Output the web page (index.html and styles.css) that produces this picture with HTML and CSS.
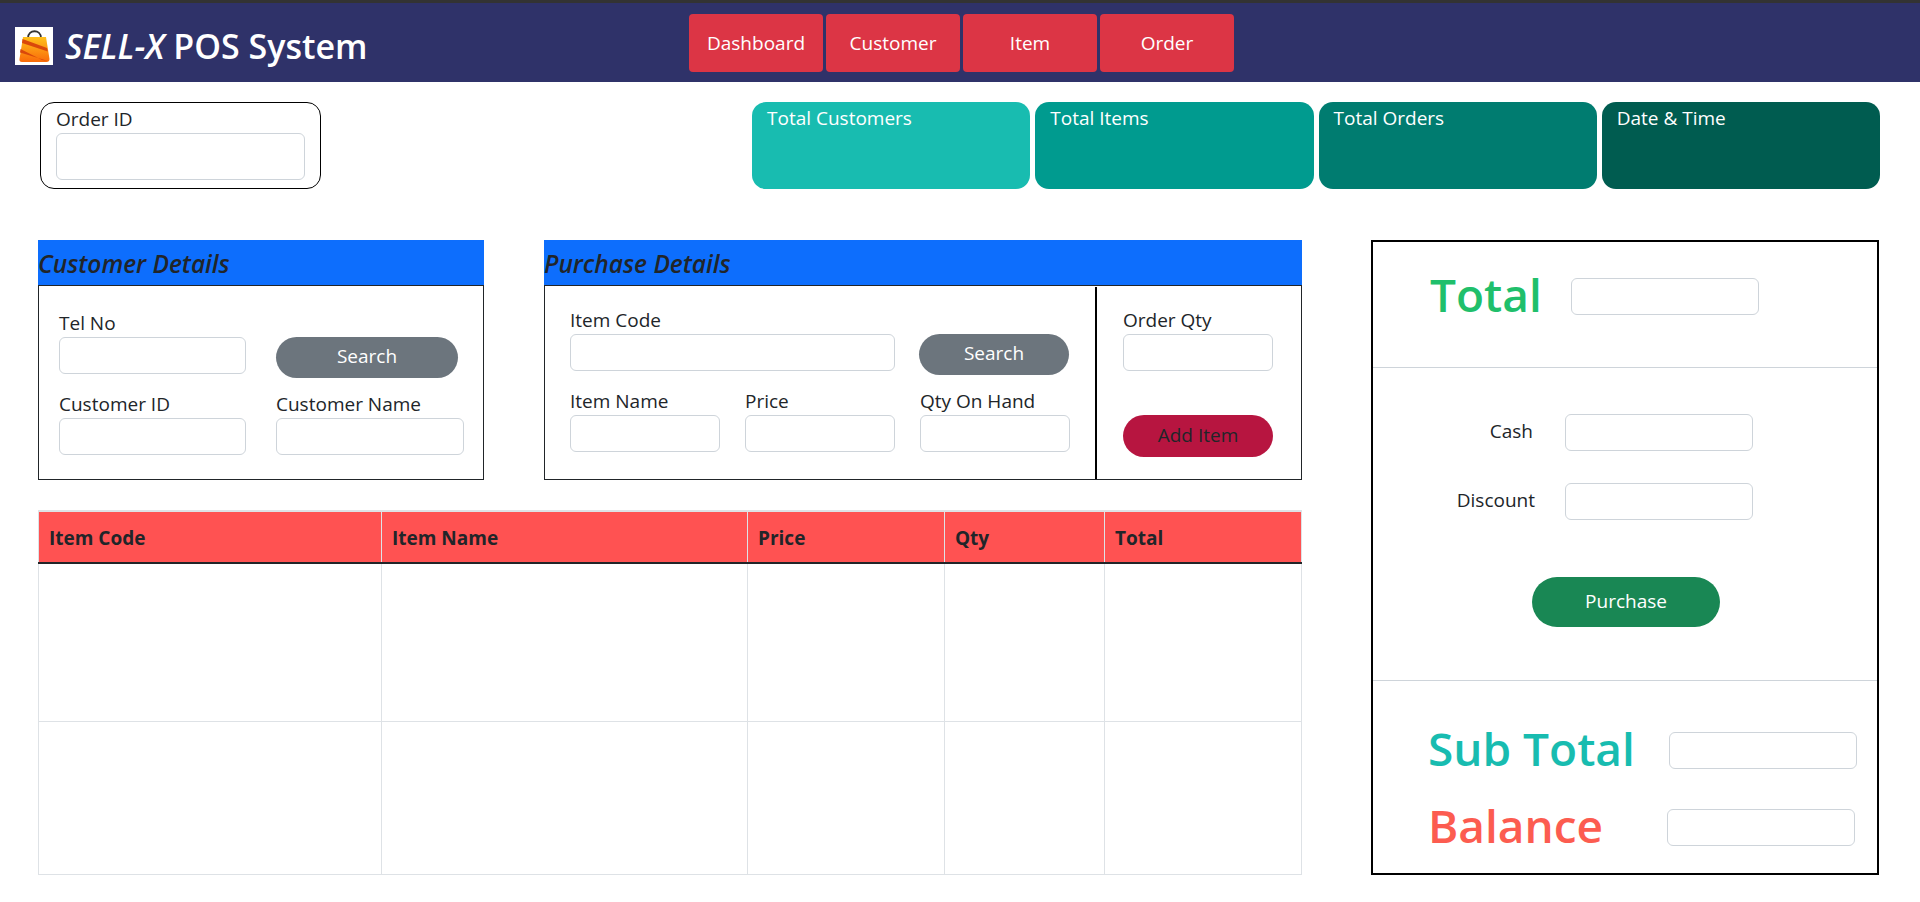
FILE: index.html
```html
<!DOCTYPE html>
<html lang="en">
<head>
    <meta charset="UTF-8">
    <meta name="viewport" content="width=device-width, initial-scale=1.0">
    <title>SELL-X POS System</title>
    <link rel="stylesheet" href="styles.css">
</head>
<body>
    <header class="topbar">
        <div class="brand">
            <svg class="logo" viewBox="0 0 38 38" width="38" height="38">
                <defs>
                    <linearGradient id="bag" x1="0" y1="0" x2="0" y2="1">
                        <stop offset="0" stop-color="#ffc01a"/>
                        <stop offset="1" stop-color="#f96a0a"/>
                    </linearGradient>
                </defs>
                <rect width="38" height="38" fill="#fff"/>
                <path d="M13 11 C13 2 26 2 26 11" fill="none" stroke="#333" stroke-width="1.8"/>
                <path d="M8 10 H31 L34.5 32 Q34.5 35 31.500 35 H7 Q4 35 4.500 32 Z" fill="url(#bag)"/>
                <path d="M7.500 12 L32 21 L32.800 24.500 L7 16 Z" fill="#d9480b"/>
                <path d="M5.500 22 L27 33 L33 34 L5 25.500 Z" fill="#d9480b"/>
            </svg>
            <h1 class="brand-title"><em>SELL-X</em> POS System</h1>
        </div>
        <nav class="nav">
            <a class="nav-btn">Dashboard</a>
            <a class="nav-btn">Customer</a>
            <a class="nav-btn">Item</a>
            <a class="nav-btn">Order</a>
        </nav>
    </header>

    <section class="summary">
        <div class="order-box">
            <label>Order ID</label>
            <input type="text" class="input input-tall">
        </div>
        <div class="stats">
            <div class="stat stat-1">Total Customers</div>
            <div class="stat stat-2">Total Items</div>
            <div class="stat stat-3">Total Orders</div>
            <div class="stat stat-4">Date &amp; Time</div>
        </div>
    </section>

    <main class="content">
        <div class="left-col">
            <div class="panels">
                <div class="panel panel-customer">
                    <h2 class="panel-head">Customer Details</h2>
                    <div class="panel-body customer-grid">
                        <div class="field">
                            <label>Tel No</label>
                            <input type="text" class="input">
                        </div>
                        <div class="field field-btn">
                            <button class="btn btn-grey btn-customer">Search</button>
                        </div>
                        <div class="field">
                            <label>Customer ID</label>
                            <input type="text" class="input">
                        </div>
                        <div class="field">
                            <label>Customer Name</label>
                            <input type="text" class="input">
                        </div>
                    </div>
                </div>
                <div class="panel panel-purchase">
                    <h2 class="panel-head">Purchase Details</h2>
                    <div class="panel-body purchase-body">
                        <div class="purchase-grid">
                            <div class="field span-2">
                                <label>Item Code</label>
                                <input type="text" class="input">
                            </div>
                            <div class="field field-btn">
                                <button class="btn btn-grey">Search</button>
                            </div>
                            <div class="field">
                                <label>Item Name</label>
                                <input type="text" class="input">
                            </div>
                            <div class="field">
                                <label>Price</label>
                                <input type="text" class="input">
                            </div>
                            <div class="field">
                                <label>Qty On Hand</label>
                                <input type="text" class="input">
                            </div>
                        </div>
                        <div class="qty-col">
                            <div class="field">
                                <label>Order Qty</label>
                                <input type="text" class="input">
                            </div>
                            <button class="btn btn-add">Add Item</button>
                        </div>
                    </div>
                </div>
            </div>

            <table class="cart">
                <thead>
                    <tr>
                        <th class="col-code">Item Code</th>
                        <th class="col-name">Item Name</th>
                        <th class="col-price">Price</th>
                        <th class="col-qty">Qty</th>
                        <th>Total</th>
                    </tr>
                </thead>
                <tbody>
                    <tr class="row-a"><td></td><td></td><td></td><td></td><td></td></tr>
                    <tr class="row-b"><td></td><td></td><td></td><td></td><td></td></tr>
                </tbody>
            </table>
        </div>

        <aside class="totals">
            <div class="totals-top">
                <span class="big big-total">Total</span>
                <input type="text" class="input">
            </div>
            <div class="totals-mid">
                <div class="pay-row">
                    <label>Cash</label>
                    <input type="text" class="input">
                </div>
                <div class="pay-row pay-row-discount">
                    <label>Discount</label>
                    <input type="text" class="input">
                </div>
                <button class="btn btn-purchase">Purchase</button>
            </div>
            <div class="totals-bottom">
                <div class="sum-row">
                    <span class="big big-sub">Sub Total</span>
                    <input type="text" class="input">
                </div>
                <div class="sum-row sum-row-balance">
                    <span class="big big-balance">Balance</span>
                    <input type="text" class="input">
                </div>
            </div>
        </aside>
    </main>
</body>
</html>
```

FILE: styles.css
```css
* {
    box-sizing: border-box;
}
body {
    margin: 0;
    font-family: "Open Sans", "Noto Sans", sans-serif;
    font-size: 19px;
    color: #212529;
    background: #fff;
}
label {
    display: block;
    height: 24px;
    line-height: 20px;
    white-space: nowrap;
}
.input {
    display: block;
    width: 100%;
    height: 37px;
    border: 1px solid #ced4da;
    border-radius: 6px;
    background: #fff;
    outline: none;
}
.input-tall {
    height: 47px;
}

/* top bar */
.topbar {
    display: flex;
    height: 82px;
    border-top: 3px solid #333;
    background: #2f3269;
}
.brand {
    display: flex;
    align-items: center;
    width: 689px;
    padding-left: 15px;
    padding-top: 7px;
}
.logo {
    flex: none;
}
.brand-title {
    margin: 0 0 0 12px;
    font-size: 34px;
    font-weight: 600;
    line-height: 38px;
    color: #fff;
    white-space: nowrap;
}
.nav {
    display: flex;
    gap: 3px;
    height: 58px;
    margin-top: 11px;
}
.nav-btn {
    display: flex;
    align-items: center;
    justify-content: center;
    width: 134px;
    border-radius: 4px;
    background: #dc3545;
    color: #fff;
}

/* order id + stat cards */
.summary {
    display: flex;
    justify-content: space-between;
    padding: 20px 40px 0;
}
.order-box {
    width: 281px;
    height: 87px;
    padding: 6px 15px 0;
    border: 1px solid #000;
    border-radius: 14px;
}
.stats {
    display: grid;
    grid-template-columns: repeat(4, 1fr);
    gap: 5px;
    width: 1128px;
}
.stat {
    height: 87px;
    padding: 3px 15px;
    border-radius: 14px;
    color: #fff;
}
.stat-1 {
    background: #18bcb0;
}
.stat-2 {
    background: #009b8f;
}
.stat-3 {
    background: #007c70;
}
.stat-4 {
    background: #005c50;
}

/* main area */
.content {
    display: flex;
    justify-content: space-between;
    padding: 51px 41px 0 38px;
}
.left-col {
    width: 1264px;
}
.panels {
    display: flex;
    gap: 60px;
}
.panel-customer {
    width: 446px;
}
.panel-purchase {
    width: 758px;
}
.panel-head {
    height: 45px;
    margin: 0;
    background: #0d6efd;
    font-size: 24.5px;
    font-style: italic;
    font-weight: 600;
    line-height: 47px;
    white-space: nowrap;
}
.panel-body {
    height: 195px;
    border: 1px solid #212529;
}
.field-btn {
    padding-top: 24px;
}
.customer-grid {
    display: grid;
    grid-template-columns: 187px 188px;
    column-gap: 30px;
    row-gap: 16px;
    align-content: start;
    padding: 27px 0 0 20px;
}
.purchase-body {
    display: flex;
}
.purchase-grid {
    display: grid;
    grid-template-columns: 150px 150px 150px;
    column-gap: 25px;
    row-gap: 16px;
    align-content: start;
    width: 550px;
    padding: 24px 0 0 25px;
}
.span-2 {
    grid-column: span 2;
}
.purchase-grid .btn-grey {
    margin-left: -1px;
}
.qty-col {
    width: 206px;
    margin-top: 1px;
    padding: 23px 0 0 26px;
    border-left: 2px solid #000;
}
.qty-col .field,
.qty-col .btn {
    width: 150px;
}
.qty-col .btn {
    margin-top: 44px;
}

/* buttons */
.btn {
    display: block;
    width: 100%;
    height: 41px;
    padding: 0 0 3px;
    border: none;
    border-radius: 21px;
    font-family: inherit;
    font-size: 19px;
}
.btn-grey {
    background: #6c757d;
    color: #fff;
}
.btn-customer {
    width: 182px;
}
.btn-add {
    height: 42px;
    background: #b71540;
    color: #212529;
}
.btn-purchase {
    width: 188px;
    height: 50px;
    margin: 57px 0 0 159px;
    border-radius: 25px;
    background: #198754;
    color: #fff;
}

/* item table */
.cart {
    width: 1264px;
    height: 365px;
    margin-top: 30px;
    border-collapse: collapse;
    table-layout: fixed;
}
.cart th,
.cart td {
    border: 1px solid #dee2e6;
    padding: 0 10px;
}
.cart th {
    height: 52px;
    padding-top: 2px;
    background: #ff5252;
    font-size: 19px;
    font-weight: 700;
    text-align: left;
    border-bottom: 2px solid #212529;
    border-top-width: 2px;
}
.col-code {
    width: 343px;
}
.col-name {
    width: 366px;
}
.col-price {
    width: 197px;
}
.col-qty {
    width: 160px;
}
.row-a {
    height: 158px;
}
.row-b {
    height: 153px;
}

/* right hand totals */
.totals {
    width: 508px;
    height: 635px;
    border: 2px solid #000;
}
.big {
    flex: none;
    font-size: 46px;
    font-weight: 600;
    line-height: 33px;
    white-space: nowrap;
}
.big-total {
    width: 141px;
    color: #20bf6b;
}
.big-sub {
    width: 241px;
    color: #18bcb0;
}
.big-balance {
    width: 239px;
    color: #fc5c50;
}
.totals .input {
    width: 188px;
}
.totals-top {
    display: flex;
    height: 126px;
    padding: 36px 0 0 57px;
    border-bottom: 1px solid #ced4da;
}
.totals-mid {
    height: 313px;
    padding-top: 46px;
    border-bottom: 1px solid #ced4da;
}
.pay-row {
    display: flex;
    align-items: center;
    gap: 32px;
}
.pay-row label {
    width: 160px;
    text-align: right;
}
.pay-row-discount {
    gap: 30px;
    margin-top: 32px;
}
.pay-row-discount label {
    width: 162px;
}
.totals-bottom {
    padding: 51px 0 0 55px;
}
.sum-row {
    display: flex;
    height: 37px;
}
.sum-row-balance {
    margin-top: 40px;
}
```
